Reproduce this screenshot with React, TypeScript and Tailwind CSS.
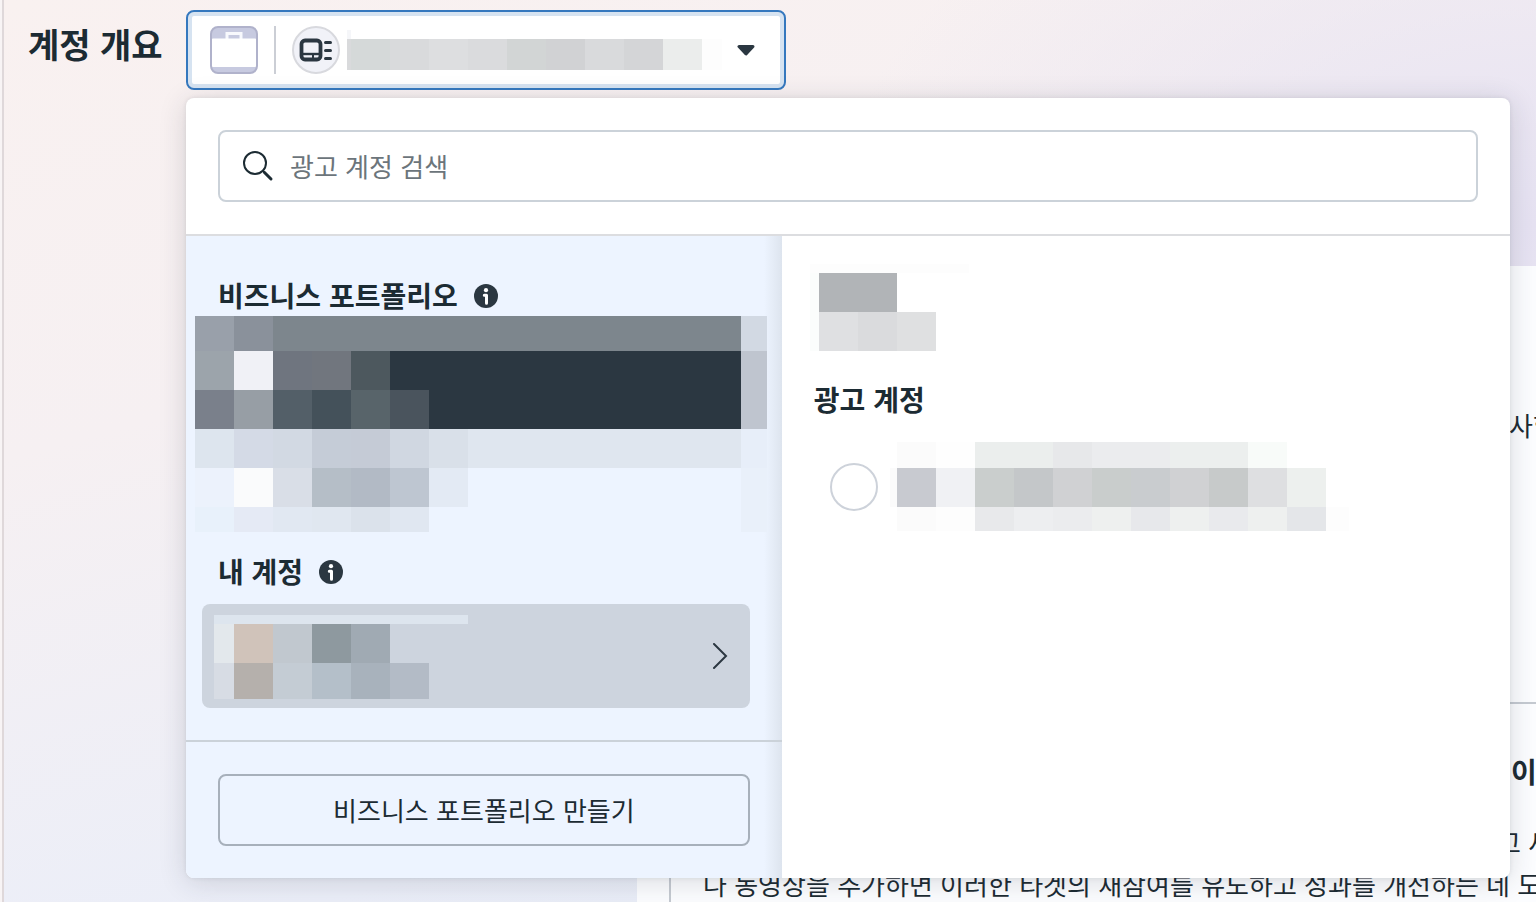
import { useState } from 'react'

type MosaicRow = { h: string; cells: string[] }

const ACCOUNT_NAME: MosaicRow[] = [
  { h: 'h-[9px]', cells: ['w-1 bg-[#f5f6f9]'] },
  {
    h: 'h-[31px]',
    cells: [
      'w-1 bg-[#d9dadc]', 'w-[39px] bg-[#d5d9d9]', 'w-[39px] bg-[#d9dadc]', 'w-[39px] bg-[#dddee0]',
      'w-[39px] bg-[#dadbdd]', 'w-[39px] bg-[#d2d5d5]', 'w-[39px] bg-[#d1d2d4]', 'w-[39px] bg-[#d9dadc]',
      'w-[39px] bg-[#d4d5d7]', 'w-[39px] bg-[#ebedec]', 'w-5 bg-[#fdfdfd]',
    ],
  },
]

const PORTFOLIOS: MosaicRow[] = [
  {
    h: 'h-[35px]',
    cells: ['w-[39px] bg-[#99a0aa]', 'w-[39px] bg-[#8a919b]', 'w-[468px] bg-[#7d868d]', 'w-[26px] bg-[#d2d9e3]'],
  },
  {
    h: 'h-[39px]',
    cells: [
      'w-[39px] bg-[#9ca4ab]', 'w-[39px] bg-[#f0f1f6]', 'w-[39px] bg-[#6f757f]', 'w-[39px] bg-[#71767e]',
      'w-[39px] bg-[#4d585e]', 'w-[351px] bg-[#2b3741]', 'w-[26px] bg-[#bfc5cf]',
    ],
  },
  {
    h: 'h-[39px]',
    cells: [
      'w-[39px] bg-[#7a808b]', 'w-[39px] bg-[#979ea5]', 'w-[39px] bg-[#535f68]', 'w-[39px] bg-[#44515a]',
      'w-[39px] bg-[#58646a]', 'w-[39px] bg-[#4a545d]', 'w-[312px] bg-[#2b3741]', 'w-[26px] bg-[#bfc5cf]',
    ],
  },
  {
    h: 'h-[39px]',
    cells: [
      'w-[39px] bg-[#dde5ee]', 'w-[39px] bg-[#d4dae6]', 'w-[39px] bg-[#d2d9e3]', 'w-[39px] bg-[#c5ccd7]',
      'w-[39px] bg-[#c5cbd6]', 'w-[39px] bg-[#d0d7e1]', 'w-[39px] bg-[#d9e0e9]', 'w-[273px] bg-[#dfe6ef]',
      'w-[26px] bg-[#e7eef9]',
    ],
  },
  {
    h: 'h-[39px]',
    cells: [
      'w-[39px] bg-[#ecf2fc]', 'w-[39px] bg-[#fafbfc]', 'w-[39px] bg-[#d9dee7]', 'w-[39px] bg-[#b5bec7]',
      'w-[39px] bg-[#b2bac5]', 'w-[39px] bg-[#bec6d1]', 'w-[39px] bg-[#e3eaf4]', 'w-[273px]',
      'w-[26px] bg-[#e9f0fa]',
    ],
  },
  {
    h: 'h-[25px]',
    cells: [
      'w-[39px] bg-[#e8f1fb]', 'w-[39px] bg-[#e5eaf5]', 'w-[39px] bg-[#e1e8f2]', 'w-[39px] bg-[#e0e7f0]',
      'w-[39px] bg-[#dbe2eb]', 'w-[39px] bg-[#e0e7f1]', 'w-[312px]', 'w-[26px] bg-[#e9f0fa]',
    ],
  },
]

const MY_ACCOUNT: MosaicRow[] = [
  { h: 'h-[9px]', cells: ['w-[254px] bg-[#dde5ee]'] },
  {
    h: 'h-[39px]',
    cells: [
      'w-5 bg-[#e3e8ec]', 'w-[39px] bg-[#d0c3ba]', 'w-[39px] bg-[#c1c8cf]', 'w-[39px] bg-[#8e999f]',
      'w-[39px] bg-[#a0aab3]',
    ],
  },
  {
    h: 'h-9',
    cells: [
      'w-5 bg-[#d7dce4]', 'w-[39px] bg-[#b5b0ac]', 'w-[39px] bg-[#c4ccd4]', 'w-[39px] bg-[#b4bfc9]',
      'w-[39px] bg-[#a8b2bc]', 'w-[39px] bg-[#b3bbc6]',
    ],
  },
]

const OWNER: MosaicRow[] = [
  { h: 'h-[9px]', cells: ['w-[159px] bg-[#fdfdfd]'] },
  { h: 'h-[39px]', cells: ['w-[9px] bg-[#fbfdfc]', 'w-[78px] bg-[#b1b4b7]'] },
  {
    h: 'h-[39px]',
    cells: ['w-[9px] bg-[#fbfdfc]', 'w-[39px] bg-[#dfe0e2]', 'w-[39px] bg-[#dadbdd]', 'w-[39px] bg-[#dfe0e1]'],
  },
]

const AD_ACCOUNT: MosaicRow[] = [
  {
    h: 'h-[26px]',
    cells: [
      'w-[7px]', 'w-[39px] bg-[#fbfbfb]', 'w-[39px] bg-[#fefefe]', 'w-[78px] bg-[#ebeeed]',
      'w-[39px] bg-[#e7e8ea]', 'w-[78px] bg-[#ebecee]', 'w-[78px] bg-[#ecefee]', 'w-[39px] bg-[#f8fbf9]',
    ],
  },
  {
    h: 'h-[39px]',
    cells: [
      'w-[7px] bg-[#fbfbfb]', 'w-[39px] bg-[#c8cad0]', 'w-[39px] bg-[#f0f1f4]', 'w-[39px] bg-[#cacecd]',
      'w-[39px] bg-[#c4c7c9]', 'w-[39px] bg-[#d0d1d3]', 'w-[39px] bg-[#c9cdcc]', 'w-[39px] bg-[#c9cccf]',
      'w-[39px] bg-[#d0d1d3]', 'w-[39px] bg-[#c7caca]', 'w-[39px] bg-[#dedfe1]', 'w-[39px] bg-[#edf0ee]',
    ],
  },
  {
    h: 'h-6',
    cells: [
      'w-[7px]', 'w-[39px] bg-[#fbfbfb]', 'w-[39px] bg-[#fdfdfd]', 'w-[39px] bg-[#e8e9eb]',
      'w-[39px] bg-[#edeef0]', 'w-[39px] bg-[#ebecee]', 'w-[39px] bg-[#eef0ef]', 'w-[39px] bg-[#e7e8eb]',
      'w-[39px] bg-[#eef0ef]', 'w-[39px] bg-[#e9eaed]', 'w-[39px] bg-[#eef0ef]', 'w-[39px] bg-[#e4e6e9]',
      'w-[23px] bg-[#fdfdfd]',
    ],
  },
]

// Redacted names are shown as coarse colour blocks
function Mosaic({ rows }: { rows: MosaicRow[] }) {
  return (
    <span className="flex flex-col" aria-hidden="true">
      {rows.map((row, i) => (
        <span key={i} className={`flex ${row.h}`}>
          {row.cells.map((cell, j) => (
            <span key={j} className={`shrink-0 ${cell}`} />
          ))}
        </span>
      ))}
    </span>
  )
}

function BriefcaseIcon() {
  return (
    <svg width="48" height="48" viewBox="0 0 48 48" fill="none" className="shrink-0">
      <rect x="1" y="1" width="46" height="46" rx="7" fill="#c7cae0" />
      <path d="M17 13V7.500h14V13" stroke="#f8f9fd" strokeWidth="3" />
      <rect x="1" y="12.500" width="46" height="28.500" rx="2" fill="#fff" />
      <rect x="1" y="1" width="46" height="46" rx="7" stroke="#b0b2cb" strokeWidth="2" />
    </svg>
  )
}

function AdAccountIcon() {
  return (
    <svg width="48" height="48" viewBox="0 0 48 48" fill="none" className="shrink-0">
      <circle cx="24" cy="24" r="23" fill="#f1f2f8" stroke="#d8d9de" strokeWidth="2" />
      <rect x="9.500" y="14.500" width="19" height="19" rx="3.500" stroke="#2b3741" strokeWidth="3.800" />
      <path d="M10 28h18" stroke="#2b3741" strokeWidth="2.400" />
      <path d="M21 28v5" stroke="#2b3741" strokeWidth="2" />
      <path d="M33.500 16.500h5M33.500 24.500h5M33.500 32.500h5" stroke="#2b3741" strokeWidth="3" strokeLinecap="round" />
    </svg>
  )
}

function InfoIcon() {
  return (
    <svg width="24" height="24" viewBox="0 0 24 24" className="shrink-0">
      <circle cx="12" cy="12" r="12" fill="#2b3741" />
      <circle cx="12" cy="6.200" r="2.100" fill="#fff" />
      <path d="M10.300 11.300h2.200v8" stroke="#fff" strokeWidth="3" fill="none" strokeLinecap="round" strokeLinejoin="round" />
    </svg>
  )
}

function SearchIcon() {
  return (
    <svg width="32" height="32" viewBox="0 0 32 32" fill="none" stroke="#1c2b33" className="shrink-0">
      <circle cx="13" cy="13" r="11" strokeWidth="2" />
      <path d="M21 21l2 2" strokeWidth="2" />
      <path d="M22.500 22.500l6.500 6.500" strokeWidth="3" strokeLinecap="round" />
    </svg>
  )
}

function SectionTitle({ children }: { children: React.ReactNode }) {
  return (
    <div className="flex items-center gap-4 px-8">
      <h2 className="text-[28px] leading-[38px] pb-[2px] font-bold">{children}</h2>
      <InfoIcon />
    </div>
  )
}

function AccountPanel() {
  const [query, setQuery] = useState('')
  const [picked, setPicked] = useState(false)

  return (
    <section className="absolute top-[98px] left-[186px] right-[26px] z-10 rounded-lg overflow-hidden bg-white shadow-[0_4px_28px_rgba(40,45,60,0.16),0_0_4px_rgba(40,45,60,0.1)]">
      <div className="p-8 border-b-2 border-[#dcdde0]">
        <label className="flex items-center gap-4 h-[72px] px-[22px] border-2 border-[#cbd2d9] rounded-lg bg-white">
          <SearchIcon />
          <input
            type="text"
            aria-label="광고 계정 검색"
            placeholder="광고 계정 검색"
            value={query}
            onChange={(e) => setQuery(e.target.value)}
            className="flex-1 min-w-0 bg-transparent outline-none text-[26px] leading-10 placeholder:text-[#6c757b]"
          />
        </label>
      </div>

      <div className="flex">
        <div className="w-[45%] shrink-0 bg-[#edf4ff] bg-[linear-gradient(to_left,#dde4ee,#edf4ff_18px)]">
          <div className="pt-10 pb-8">
            <SectionTitle>비즈니스 포트폴리오</SectionTitle>
            <div className="pl-[9px]">
              <Mosaic rows={PORTFOLIOS} />
            </div>
            <div className="mt-5 mb-3">
              <SectionTitle>내 계정</SectionTitle>
            </div>
            <div className="pl-4 pr-8">
              <button
                type="button"
                aria-label="내 계정"
                className="w-full h-[104px] rounded-lg bg-[#cdd4de] pt-[2px] pl-3 pr-5 flex items-center justify-between"
              >
                <Mosaic rows={MY_ACCOUNT} />
                <svg width="18" height="28" viewBox="0 0 18 28" fill="none" stroke="#2b3741" strokeWidth="2" strokeLinecap="round">
                  <path d="M2 1l12 12L2 25" />
                </svg>
              </button>
            </div>
          </div>
          <div className="border-t-2 border-[#cbd2d9] p-8">
            <button type="button" className="w-full h-[72px] border-2 border-[#a7b0bb] rounded-lg text-[26px] leading-10">
              비즈니스 포트폴리오 만들기
            </button>
          </div>
        </div>

        <div className="flex-1 min-w-0 pt-7 pl-7">
          <Mosaic rows={OWNER} />
          <h2 className="mt-7 pl-1 text-[28px] leading-10 font-bold">광고 계정</h2>
          <label className="mt-[23px] pl-5 flex items-center gap-3">
            <input
              type="radio"
              name="ad-account"
              aria-label="광고 계정"
              checked={picked}
              onChange={() => setPicked(true)}
              className="appearance-none shrink-0 size-12 rounded-full border-2 border-[#cdd2da] bg-white checked:border-[14px] checked:border-[#0a78be]"
            />
            <Mosaic rows={AD_ACCOUNT} />
          </label>
        </div>
      </div>
    </section>
  )
}

export default function App() {
  return (
    <div
      lang="ko"
      className="relative h-screen overflow-hidden flex flex-col text-[#1c2b33] font-['Noto_Sans_CJK_KR',sans-serif] bg-[radial-gradient(700px_440px_at_100%_25%,#e6e2f2,transparent),linear-gradient(165deg,#f9f1f0_0%,#f6f0f2_35%,#ebeef8_75%,#e4eaf5_100%)]"
    >
      <div className="absolute inset-y-0 left-0 w-1 border-r-2 border-[#dfd8da] bg-[#f8f4f5]" />
      <header className="h-[98px] shrink-0 pt-[10px] pl-7 flex items-start">
        <h1 className="w-[158px] shrink-0 h-[68px] flex items-center text-[34px] leading-10 font-bold whitespace-nowrap">계정 개요</h1>
        <button
          type="button"
          aria-haspopup="listbox"
          aria-expanded="true"
          aria-label="광고 계정 선택"
          className="w-[600px] h-20 pl-[22px] pr-7 flex items-center rounded-lg border-2 border-[#3578be] bg-white shadow-[inset_0_0_0_4px_#d6e3f1]"
        >
          <BriefcaseIcon />
          <span className="ml-4 mr-4 w-0.5 h-12 bg-[#cbced5]" />
          <AdAccountIcon />
          <span className="ml-[7px]">
            <Mosaic rows={ACCOUNT_NAME} />
          </span>
          <svg width="20" height="12" viewBox="0 0 20 12" className="ml-auto">
            <path d="M3 2.500h14L10 10z" fill="#2b3741" stroke="#2b3741" strokeWidth="3" strokeLinejoin="round" />
          </svg>
        </button>
      </header>

      <main className="flex-1 mt-[168px] ml-[637px] bg-[#fcfdff] overflow-hidden whitespace-nowrap text-[26px] leading-[42px]">
        <p className="mt-[138px] pl-[872px]">사항</p>
        <article className="mt-[256px] ml-8 -mr-8 border-2 border-[#c5cad1] pt-[47px] pl-8">
          <h2 className="pl-[808px] text-[28px] leading-10 font-bold">이 기능</h2>
          <p className="mt-[30px] pl-[794px]">고 새</p>
          <p>나 동영상을 추가하면 이러한 타겟의 재참여를 유도하고 성과를 개선하는 네 도움</p>
        </article>
      </main>

      <AccountPanel />
    </div>
  )
}
